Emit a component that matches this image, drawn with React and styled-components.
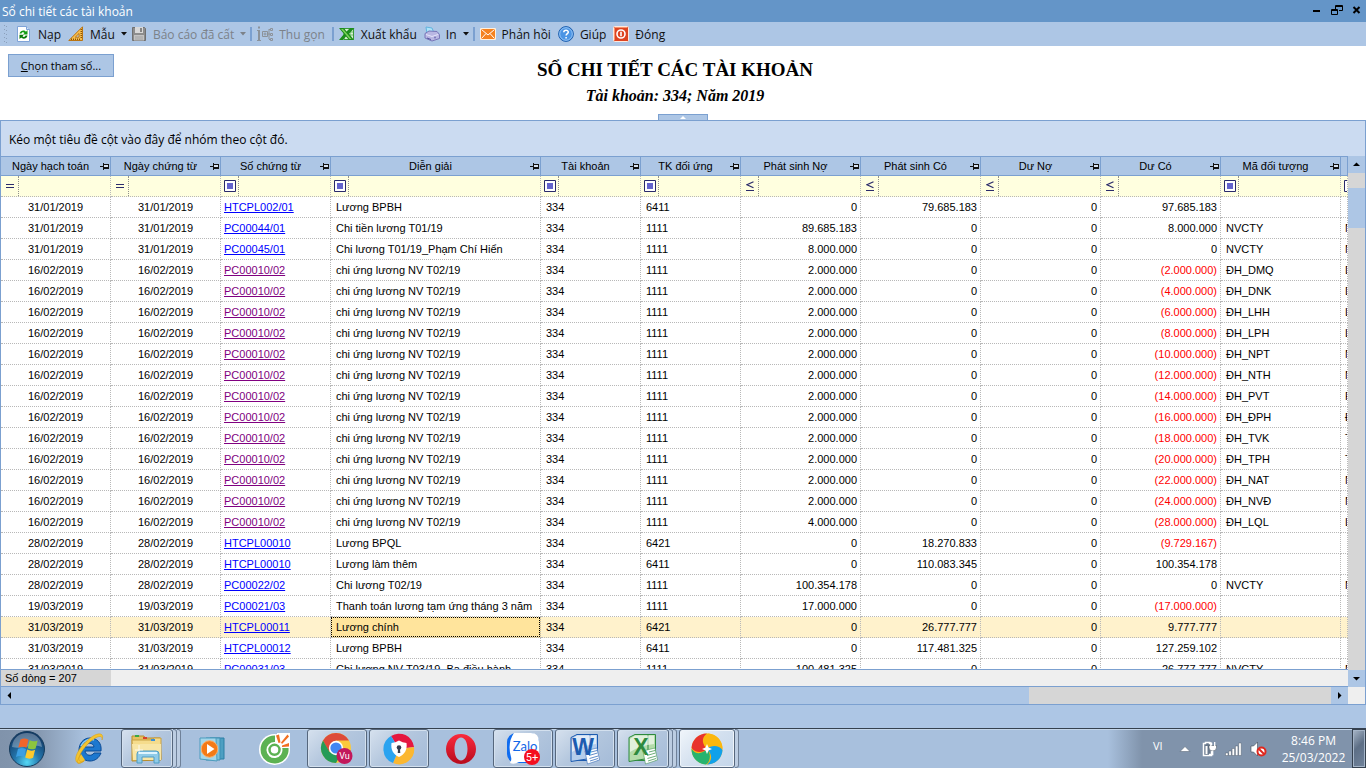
import React, { useState } from "react";
import styled, { createGlobalStyle, css } from "styled-components";

const GlobalStyle = createGlobalStyle`
  * {
    box-sizing: border-box;
  }
  body {
    margin: 0;
    font-family: "Liberation Sans", Arial, sans-serif;
    font-size: 11px;
    color: #000;
  }
  button, input {
    font: inherit;
    color: inherit;
    margin: 0;
    padding: 0;
    border: 0;
    background: none;
  }
`;

const UI_FONT = `"Open Sans", "Noto Sans", sans-serif`;
const LINE = "#7ba0d0";
const BLUE = "#adc6e5";
const DOTS = "1px dotted #b8b8b8";

const Screen = styled.div`
  display: flex;
  flex-direction: column;
  height: 100vh;
  overflow: hidden;
  background: ${BLUE};
`;

const TitleBar = styled.header`
  display: flex;
  align-items: center;
  justify-content: space-between;
  height: 22px;
  padding: 0 3px 0 2px;
  background: #6495c8;
  color: #fff;
  font-family: ${UI_FONT};
  font-size: 12px;
`;

const WindowButtons = styled.div`
  display: flex;
  gap: 8px;
`;

const WindowButton = styled.button`
  display: flex;
  width: 12px;
  height: 20px;
  align-items: center;
  justify-content: center;
`;

const Toolbar = styled.nav`
  display: flex;
  align-items: center;
  height: 24px;
  padding-left: 4px;
  background: ${BLUE};
  font-family: ${UI_FONT};
  font-size: 12px;
`;

const Grip = styled.svg`
  margin-right: 8px;
`;

const ToolButton = styled.button`
  display: flex;
  align-items: center;
  gap: 6px;
  height: 22px;
  padding-right: ${(p) => (p.$menu ? 4 : 7)}px;
  white-space: nowrap;
  color: ${(p) => (p.disabled ? "#7c8289" : "#101010")};
  svg {
    flex: none;
  }
`;

const Separator = styled.span`
  width: 2px;
  height: 14px;
  margin-right: 5px;
  background: ${LINE};
`;

const ReportHead = styled.section`
  display: grid;
  grid-template-columns: 1fr auto 1fr;
  height: 74px;
  padding: 8px 24px 0 8px;
  background: #fff;
`;

const ParamButton = styled.button`
  justify-self: start;
  width: 106px;
  height: 23px;
  border: 1px solid ${LINE};
  background: ${BLUE};
  font-family: ${UI_FONT};
`;

const Titles = styled.div`
  text-align: center;
  font-family: "Liberation Serif", "Times New Roman", serif;
  font-weight: bold;
`;

const Title = styled.h1`
  margin: 4px 0 0;
  font-size: 19px;
  line-height: 24px;
`;

const SubTitle = styled.h2`
  margin: 2px 0 0;
  font-size: 16px;
  line-height: 24px;
  font-style: italic;
`;

const Splitter = styled.div`
  display: flex;
  justify-content: center;
  align-items: flex-end;
  height: 0;
`;

const SplitHandle = styled.button`
  display: flex;
  align-items: center;
  justify-content: center;
  width: 50px;
  height: 6px;
  border: 1px solid ${LINE};
  border-bottom: 0;
  background: ${BLUE};
`;

const Grid = styled.main`
  flex: 1;
  min-height: 0;
  display: flex;
  flex-direction: column;
  border: 1px solid ${LINE};
`;

const GroupArea = styled.div`
  flex: none;
  height: 35px;
  padding: 0 8px;
  background: #cbdbf1;
  font-family: ${UI_FONT};
  font-size: 12px;
  line-height: 38px;
`;

const GridBody = styled.div`
  flex: 1;
  min-height: 0;
  display: grid;
  grid-template-columns: 1fr 17px;
  grid-template-rows: 1fr 17px;
  background: #fff;
`;

const TablePane = styled.div`
  display: flex;
  flex-direction: column;
  min-width: 0;
  min-height: 0;
  overflow: hidden;
`;

const TableClip = styled.div`
  flex: 1;
  min-height: 0;
  overflow: hidden;
`;

const Table = styled.table`
  width: 100%;
  table-layout: fixed;
  border-collapse: separate;
  border-spacing: 0;
`;

const HeadCell = styled.th`
  height: 20px;
  padding: 0;
  border: solid ${LINE};
  border-width: 1px 1px 1px 0;
  background: ${BLUE};
  font-weight: normal;
  overflow: hidden;
`;

const HeadInner = styled.div`
  display: flex;
  align-items: center;
  line-height: 18px;
  white-space: nowrap;
  span {
    flex: 1;
  }
  svg {
    flex: none;
  }
`;

const FilterCell = styled.td`
  height: 21px;
  padding: 0;
  border-right: ${DOTS};
  border-bottom: ${DOTS};
  background: #ffffdf;
  overflow: hidden;
`;

const FilterInner = styled.label`
  display: flex;
  height: 20px;
`;

const Operator = styled.span`
  flex: none;
  display: flex;
  align-items: center;
  justify-content: center;
  width: 18px;
  border-right: 1px dotted #909090;
`;

const FilterInput = styled.input`
  flex: 1;
  min-width: 0;
  padding: 0 3px;
  outline: none;
`;

const cellPadding = { center: 3, right: 3, doc: 3, name: 4, left: 5 };

const Cell = styled.td`
  height: 21px;
  padding: 0 ${(p) => cellPadding[p.$align]}px;
  border-right: ${DOTS};
  border-bottom: ${DOTS};
  line-height: 20px;
  text-align: ${(p) => (p.$align === "center" || p.$align === "right" ? p.$align : "left")};
  white-space: nowrap;
  overflow: hidden;
  color: ${(p) => (p.$negative ? "#ff0000" : "#000")};
  ${(p) =>
    p.$focused &&
    css`
      position: relative;
      background: #ffe49c;
      &::after {
        content: "";
        position: absolute;
        inset: 0;
        border: 1px dotted #000;
      }
    `}
`;

const Row = styled.tr`
  background: ${(p) => (p.$active ? "#fff2cc" : "#fff")};
  cursor: default;
`;

const DocLink = styled.a`
  color: ${(p) => (p.$visited ? "#800080" : "#0000ff")};
`;

const Summary = styled.div`
  flex: none;
  height: 18px;
  border: solid ${LINE};
  border-width: 1px 0;
  background: #efefef;
  line-height: 17px;
`;

const SummaryCell = styled.div`
  width: 110px;
  height: 16px;
  padding-left: 4px;
  background: #d6d6d6;
`;

const VScroll = styled.div`
  display: flex;
  flex-direction: column;
  background: #d6d6d6;
`;

const HScroll = styled.div`
  display: flex;
  background: #d6d6d6;
`;

const ScrollButton = styled.button`
  flex: none;
  display: flex;
  align-items: center;
  justify-content: center;
  width: 17px;
  height: 17px;
  background: ${BLUE};
`;

const VTrack = styled.div`
  flex: 1;
  padding-top: 15px;
`;

const VThumb = styled.div`
  height: 40px;
  background: ${BLUE};
`;

const HTrack = styled.div`
  flex: 1;
`;

const HThumb = styled.div`
  width: 77%;
  height: 17px;
  background: ${BLUE};
`;

const Corner = styled.div`
  background: #efefef;
`;

const StatusStrip = styled.div`
  flex: none;
  height: 23px;
  background: ${BLUE};
`;

const Taskbar = styled.footer`
  flex: none;
  display: flex;
  height: 40px;
  border-top: 1px solid #35414f;
  box-shadow: inset 0 1px 0 #c4d6ea;
  background:
    linear-gradient(90deg, #8093ab 0, #8598b0 38px, rgba(168, 192, 221, 0) 84px),
    linear-gradient(270deg, #8093ab 0, #8093ab 224px, rgba(168, 192, 221, 0) 258px),
    #a8c0dd;
`;

const StartButton = styled.button`
  flex: none;
  width: 59px;
  padding-left: 8px;
  text-align: left;
  svg {
    display: block;
  }
`;

const TaskSlot = styled.div`
  flex: none;
  display: flex;
  width: 62px;
  padding-right: 2px;
`;

const TaskButton = styled.button`
  flex: 1;
  display: flex;
  align-items: center;
  justify-content: center;
  height: 39px;
  ${(p) =>
    p.$open &&
    css`
      border: 1px solid #56677d;
      border-radius: 3px;
      background: linear-gradient(135deg, #d6e1ee 0%, #b4c7de 45%, #a4bbd8 100%);
      box-shadow: inset 0 0 0 1px #d3e0ee;
    `}
  ${(p) =>
    p.$current &&
    css`
      background: linear-gradient(135deg, #f0f5fa 0%, #d3e0ef 50%, #c4d6ea 100%);
      box-shadow: inset 0 0 0 1px #eef4fa;
    `}
`;

const StackEdge = styled.span`
  width: 4px;
  height: 39px;
  border: solid #6f8199;
  border-width: 1px 1px 1px 0;
  border-radius: 0 3px 3px 0;
  background: #bccde2;
`;

const Tray = styled.div`
  display: flex;
  align-items: center;
  margin-left: auto;
  color: #fff;
  font-family: ${UI_FONT};
`;

const Lang = styled.span`
  width: 11px;
  margin: 0 13px 6px 0;
`;

const TrayButton = styled.button`
  display: flex;
  margin-right: 8px;
`;

const Clock = styled.time`
  width: 77px;
  font-size: 12px;
  line-height: 17px;
  text-align: center;
`;

const ShowDesktop = styled.button`
  width: 14px;
  height: 39px;
  border: 1px solid #35414f;
  background: linear-gradient(135deg, #a9b7c8, #5d6f86 45%, #71839b);
  box-shadow: inset 0 0 0 1px #a5b5c8;
`;

const CaretDown = () => (
  <svg width="6" height="4" viewBox="0 0 6 4">
    <path d="M0 0h6L3 3.600z" fill="currentColor" />
  </svg>
);

const RefreshIcon = () => (
  <svg width="16" height="16" viewBox="0 0 16 16">
    <path d="M1.500.5h9l3 3v12h-12z" fill="#fff" stroke="#7fa3d8" />
    <path d="M10.500.5v3h3" fill="#d4e3f7" stroke="#7fa3d8" />
    <path d="M3.500 7.500C4.500 4 8.500 3.500 10 5.700L11.500 4v4.500H7L8.500 7C7.500 5.700 5.700 6.300 5.500 7.500z" fill="#119c11" />
    <path d="M11.500 9.500c-.8 3.500-4.800 4-6.300 2L3.500 13V8.800h4.300L6.500 10.200c1 1.200 2.600.8 3-.7z" fill="#087b08" />
  </svg>
);

const RulerIcon = () => (
  <svg width="16" height="16" viewBox="0 0 16 16">
    <path d="M14.500.8v13.700H.8z" fill="#f7bd4a" stroke="#b97412" />
    <path d="M11 7.500v3.700H7.300z" fill="#c2d4ea" stroke="#b97412" />
    <path d="M3.500 14v-1.500M5.500 14v-1.500M7.500 14v-1.500M9.500 14v-1.500M11.500 14v-1.500M14 3.500h-1.500M14 5.500h-1.500M14 7.500h-1.500M14 9.500h-1.500M14 11.500h-1.500" stroke="#8a5205" />
  </svg>
);

const DiskIcon = () => (
  <svg width="16" height="16" viewBox="0 0 16 16">
    <path d="M1.500 1.500h12l1 1v12h-13z" fill="#8d8d8d" stroke="#707070" />
    <path d="M4 1h8v6H4z" fill="#d9d9d9" />
    <path d="M9 2h2v4H9z" fill="#858585" />
    <path d="M3 9h10v5.500H3z" fill="#c3c3c3" />
    <path d="M4 11h8M4 13h8" stroke="#a4a4a4" />
  </svg>
);

const TreeIcon = () => (
  <svg width="16" height="16" viewBox="0 0 16 16" fill="none" stroke="#8c9299">
    <path d="M1 1.500h2" strokeWidth="2" />
    <path d="M0 4.500h2M0 14.500h4" />
    <path d="M2 4v10" strokeWidth="2" />
    <path d="M5.500 5.500h5v5h-5zM6.500 8h3M8 6.500v3M10.500 8H13M12 3v10M12 3.500h1M12 13.500h1" />
    <path d="M13.500 2.500h2v2h-2zM13.500 7.500h2v2h-2zM13.500 12.500h2v2h-2z" />
  </svg>
);

const ExcelSmallIcon = () => (
  <svg width="16" height="16" viewBox="0 0 16 16">
    <path d="M5 2.500h9.500v11H5z" fill="#d9f0d5" stroke="#3a9a3a" />
    <path d="M8 6h6M8 9h6M11 3v10" stroke="#6dbb6d" />
    <path d="M0 2h5l2.500 3.500L11 2h4.500L10 7.800l5 6.200h-5L7 10.500 4 14H0l5-6z" fill="#1d8d1d" />
    <path d="M2 3h2l8.500 10h-2z" fill="#7dd35c" />
  </svg>
);

const PrinterIcon = () => (
  <svg width="16" height="16" viewBox="0 0 16 16">
    <path d="M2 1l6 1 2 5-7 1z" fill="#aee4fa" stroke="#62b3dd" />
    <path d="M1 7.500l4-2.500 8 .5 2.500 3v4L8 15 1 12z" fill="#b9b7e3" stroke="#7876b8" />
    <path d="M2 8.500l6 2 6-2" fill="none" stroke="#e5e4fa" />
    <path d="M3 12l4 1.500" stroke="#5553a0" />
    <circle cx="11" cy="11.500" r="1" fill="#7876b8" />
  </svg>
);

const MailIcon = () => (
  <svg width="16" height="16" viewBox="0 0 16 16">
    <path d="M.5 2.500h15v11H.5z" fill="#f5821f" stroke="#fff0dd" />
    <path d="M1.500 3.500L8 9l6.500-5.500M1.500 12.500l4.500-5M14.500 12.500l-4.500-5" fill="none" stroke="#fff" />
  </svg>
);

const HelpIcon = () => (
  <svg width="16" height="16" viewBox="0 0 16 16">
    <circle cx="8" cy="8" r="7.400" fill="#4a94e4" stroke="#1e5fae" />
    <circle cx="8" cy="8" r="6.300" fill="none" stroke="#a9d2fb" strokeWidth=".8" />
    <path d="M5.800 6.300C5.800 3.500 10.400 3.600 10.300 6.200 10.200 7.600 8.100 7.700 8.100 9.600M8.100 11v1.500" fill="none" stroke="#fff" strokeWidth="1.500" />
  </svg>
);

const PowerIcon = () => (
  <svg width="16" height="16" viewBox="0 0 16 16">
    <rect x=".5" y=".5" width="15" height="15" rx="1" fill="#dd4421" stroke="#fde9df" />
    <path d="M1.500 14.500v-13h13" fill="none" stroke="#f5926e" />
    <circle cx="8" cy="8" r="4" fill="none" stroke="#fff" strokeWidth="1.600" />
    <path d="M8 5.800v4.400" stroke="#fff" strokeWidth="1.600" />
  </svg>
);

const PinIcon = () => (
  <svg width="10" height="9" viewBox="0 0 10 9" shapeRendering="crispEdges">
    <path d="M0 4h3v1H0zM3 1h1v7H3zM4 2h5v5H4z" fill="#111" />
    <path d="M4 3h4v2H4z" fill="#d7e3f3" />
  </svg>
);

const Arrow = ({ d }) => (
  <svg width="9" height="9" viewBox="0 0 9 9">
    <path d={d} fill="#000" />
  </svg>
);

const operators = {
  eq: (
    <svg width="8" height="4" viewBox="0 0 8 4">
      <path d="M0 .5h8M0 3.500h8" stroke="#2a2a6a" />
    </svg>
  ),
  box: (
    <svg width="12" height="12" viewBox="0 0 12 12">
      <path d="M.5.5h11v11H.5z" fill="#fff" stroke="#2a2a6a" />
      <path d="M3 3h6v6H3z" fill="#6464cc" />
    </svg>
  ),
  le: (
    <svg width="8" height="10" viewBox="0 0 8 10">
      <path d="M7.500.8L1 3.800l6.500 3M0 9.500h8" fill="none" stroke="#2a2a6a" strokeWidth="1.200" />
    </svg>
  ),
};

const columns = [
  { label: "Ngày hạch toán", width: 110, op: "eq" },
  { label: "Ngày chứng từ", width: 110, op: "eq" },
  { label: "Số chứng từ", width: 110, op: "box" },
  { label: "Diễn giải", width: 210, op: "box" },
  { label: "Tài khoản", width: 100, op: "box" },
  { label: "TK đối ứng", width: 100, op: "box" },
  { label: "Phát sinh Nợ", width: 120, op: "le" },
  { label: "Phát sinh Có", width: 120, op: "le" },
  { label: "Dư Nợ", width: 120, op: "le" },
  { label: "Dư Có", width: 120, op: "le" },
  { label: "Mã đối tượng", width: 120, op: "box" },
  { label: "", op: "box" },
];

// date, document, description, contra account, debit, credit, balance, code, name, visited
const advance = (balance, code, name, debit = "2.000.000") => [
  "16/02/2019", "PC00010/02", "chi ứng lương NV T02/19", "1111", debit, "0", balance, code, name, true,
];

const rows = [
  ["31/01/2019", "HTCPL002/01", "Lương BPBH", "6411", "0", "79.685.183", "97.685.183", "", ""],
  ["31/01/2019", "PC00044/01", "Chi tiền lương T01/19", "1111", "89.685.183", "0", "8.000.000", "NVCTY", "N"],
  ["31/01/2019", "PC00045/01", "Chi lương T01/19_Phạm Chí Hiển", "1111", "8.000.000", "0", "0", "NVCTY", "N"],
  advance("(2.000.000)", "ĐH_DMQ", "D"),
  advance("(4.000.000)", "ĐH_DNK", "D"),
  advance("(6.000.000)", "ĐH_LHH", "L"),
  advance("(8.000.000)", "ĐH_LPH", "L"),
  advance("(10.000.000)", "ĐH_NPT", "N"),
  advance("(12.000.000)", "ĐH_NTH", "N"),
  advance("(14.000.000)", "ĐH_PVT", "P"),
  advance("(16.000.000)", "ĐH_ĐPH", "Đ"),
  advance("(18.000.000)", "ĐH_TVK", "T"),
  advance("(20.000.000)", "ĐH_TPH", "T"),
  advance("(22.000.000)", "ĐH_NAT", "N"),
  advance("(24.000.000)", "ĐH_NVĐ", "N"),
  advance("(28.000.000)", "ĐH_LQL", "L", "4.000.000"),
  ["28/02/2019", "HTCPL00010", "Lương BPQL", "6421", "0", "18.270.833", "(9.729.167)", "", ""],
  ["28/02/2019", "HTCPL00010", "Lương làm thêm", "6411", "0", "110.083.345", "100.354.178", "", ""],
  ["28/02/2019", "PC00022/02", "Chi lương T02/19", "1111", "100.354.178", "0", "0", "NVCTY", "N"],
  ["19/03/2019", "PC00021/03", "Thanh toán lương tạm ứng tháng 3 năm", "1111", "17.000.000", "0", "(17.000.000)", "", ""],
  ["31/03/2019", "HTCPL00011", "Lương chính", "6421", "0", "26.777.777", "9.777.777", "", ""],
  ["31/03/2019", "HTCPL00012", "Lương BPBH", "6411", "0", "117.481.325", "127.259.102", "", ""],
  ["31/03/2019", "PC00031/03", "Chi lương NV T03/19_Ba điều hành", "1111", "100.481.325", "0", "26.777.777", "NVCTY", "N"],
];

const LedgerRow = ({ row, active, onSelect }) => {
  const [date, doc, text, contra, debit, credit, balance, code, name, visited] = row;
  return (
    <Row $active={active} onClick={onSelect}>
      <Cell $align="center">{date}</Cell>
      <Cell $align="center">{date}</Cell>
      <Cell $align="doc">
        <DocLink href="#" $visited={visited}>{doc}</DocLink>
      </Cell>
      <Cell $align="left" $focused={active}>{text}</Cell>
      <Cell $align="left">334</Cell>
      <Cell $align="left">{contra}</Cell>
      <Cell $align="right">{debit}</Cell>
      <Cell $align="right">{credit}</Cell>
      <Cell $align="right">0</Cell>
      <Cell $align="right" $negative={balance.startsWith("(")}>{balance}</Cell>
      <Cell $align="left">{code}</Cell>
      <Cell $align="name">{name}</Cell>
    </Row>
  );
};

const WindowsLogo = () => (
  <svg width="38" height="38" viewBox="0 0 38 38">
    <defs>
      <radialGradient id="orb" cx="50%" cy="88%" r="80%">
        <stop offset="0" stopColor="#54d8f5" />
        <stop offset=".45" stopColor="#2476ac" />
        <stop offset="1" stopColor="#123a66" />
      </radialGradient>
    </defs>
    <circle cx="19" cy="19" r="17.500" fill="url(#orb)" stroke="#153b5c" />
    <path d="M4 17C5 7 12 3 19 3s14 4 15 14c-9-4-20 3-30 0z" fill="#fff" opacity=".3" />
    <path d="M12.500 9.500c3-1.500 5.500-1 8 .2l-2 8c-2.500-1.300-5-1.400-8.200-.2z" fill="#f0652b" />
    <path d="M21.700 10.300c2.600 1.400 5.200 1.400 7.900.1l-2 8c-2.700 1.300-5.300 1.200-7.900-.1z" fill="#8cc63e" />
    <path d="M10 18.800c3-1.300 5.500-1.100 8 .2l-2 8c-2.500-1.200-5-1.300-8-.1z" fill="#3b9fe3" />
    <path d="M19.200 19.600c2.600 1.300 5.200 1.400 7.900.1l-2 8c-2.700 1.300-5.300 1.200-7.900-.1z" fill="#fcc92d" />
  </svg>
);

const IeIcon = () => (
  <svg width="34" height="34" viewBox="0 0 34 34">
    <path d="M18 6c7 0 12 5 11 13H13c.5 5 7 5.500 9 2h7c-2 5-6 8-11 8C11 29 7 24 7 18S11 6 18 6zm-5 9h9c-.5-5-8.500-5-9 0z" fill="#1d78cf" stroke="#0b4a94" />
    <path d="M9 14c2-5 8-8 13-6" fill="none" stroke="#8fd0fa" strokeWidth="1.500" />
    <path d="M9 22C3 31 5 34 12 29 4 32 6 23 14 14 22 5 31 1 30 8c3-8-5-8-13-1C9 13 2 24 4 29c1 3 5 3 9-1" fill="#f4c430" stroke="#d59a13" strokeWidth=".5" />
  </svg>
);

const FolderIcon = () => (
  <svg width="34" height="32" viewBox="0 0 34 32">
    <path d="M2 3h12l1 2h15l1 22-29 1z" fill="#e5c263" stroke="#b88d2c" />
    <path d="M2 7h20l2-2h7v21H3z" fill="#f5dc8c" stroke="#c89f40" />
    <path d="M2 11h29v16H3z" fill="#f8e6a6" />
    <path d="M5 2h4v2H5z" fill="#3aa845" />
    <path d="M13 4h4v2h-4z" fill="#d8412c" />
    <path d="M21 6h4v2h-4z" fill="#3b91d8" />
    <path d="M7 30V21q0-3 3-3h16q3 0 3 3v9h-5v-6H12v6z" fill="#8fcbe8" stroke="#4c9cc5" />
    <path d="M9 20h18" stroke="#dff5ff" strokeWidth="2" />
    <path d="M9 12v9M5 17h8" stroke="#fff" opacity=".8" />
  </svg>
);

const MediaIcon = () => (
  <svg width="28" height="26" viewBox="0 0 28 26">
    <path d="M11 2h14v21H11z" fill="#4d9fc2" stroke="#2c7fa5" />
    <path d="M7 2h14v22H7z" fill="#7dc0da" stroke="#3c8fb3" />
    <path d="M1 2h16l1 23-17-2z" fill="#a4d6ea" stroke="#4d9dbe" />
    <circle cx="10.500" cy="13" r="8.300" fill="#f47a16" stroke="#fbb06a" />
    <path d="M8 8l7.500 5L8 18z" fill="#fff" />
  </svg>
);

const CocCocIcon = () => (
  <svg width="32" height="32" viewBox="0 0 32 32">
    <circle cx="15.500" cy="16.500" r="15.500" fill="#fff" />
    <path d="M18 0h13v15H18z" fill="#fff" />
    <path d="M16 2.500A14 14 0 1 0 29.500 15h-6.300A8 8 0 1 1 16 9z" fill="#5cb253" />
    <circle cx="15.500" cy="16.800" r="5" fill="#fff" stroke="#5cb253" strokeWidth="2.500" />
    <path d="M17 2.500l3-1 1.500 8-2 .5zM28.500 1.500l1.500 2-7 7.500-1-1.500zM30 10v3.500l-7 .5v-1.500z" fill="#f26f21" />
  </svg>
);

const ChromeIcon = () => (
  <svg width="34" height="34" viewBox="0 0 34 34">
    <circle cx="16" cy="16" r="15" fill="#fbc93c" />
    <path d="M3 8.500a15 15 0 0 1 26 0H16L9 20z" fill="#dd4b3a" />
    <path d="M3 8.500A15 15 0 0 0 16 31l6.500-11.500L9.500 20z" fill="#259b58" />
    <circle cx="16" cy="16" r="7.200" fill="#fff" />
    <circle cx="16" cy="16" r="5.600" fill="#4286f4" />
    <circle cx="24.500" cy="24" r="8" fill="#c2185b" />
    <text x="24.500" y="27" fontSize="9" fill="#fff" textAnchor="middle" fontFamily="Roboto, sans-serif">Vu</text>
  </svg>
);

const AvgIcon = () => (
  <svg width="32" height="32" viewBox="0 0 32 32">
    <path d="M16 16L8 3A15 15 0 0 1 31 14z" fill="#e5173f" />
    <path d="M16 16l15-2A15 15 0 0 1 10 30z" fill="#fbb731" />
    <path d="M16 16l-6 14A15 15 0 0 1 8 3z" fill="#2aa3f0" />
    <path d="M16 7.500q3.500 2 7.500 2.500c1 7-2 11.500-7.500 14-5.500-2.500-8.500-7-7.500-14q4-.5 7.500-2.500z" fill="#fff" />
    <circle cx="16" cy="14.500" r="2.300" fill="#333c4e" />
    <path d="M15.200 14h1.600l.5 6h-2.600z" fill="#333c4e" />
  </svg>
);

const OperaIcon = () => (
  <svg width="32" height="32" viewBox="0 0 32 32">
    <defs>
      <linearGradient id="opera" x1="0" y1="0" x2="0" y2="1">
        <stop offset="0" stopColor="#fb2b3d" />
        <stop offset="1" stopColor="#b70a1c" />
      </linearGradient>
    </defs>
    <path fillRule="evenodd" d="M16 1a15 15 0 1 0 0 30 15 15 0 0 0 0-30zm0 3.500c4 0 6.500 5 6.500 11.500S20 27.500 16 27.500 9.500 22.500 9.500 16 12 4.500 16 4.500z" fill="url(#opera)" />
  </svg>
);

const ZaloIcon = () => (
  <svg width="34" height="34" viewBox="0 0 34 34">
    <rect x="1" y="1" width="32" height="30" rx="9" fill="#0f6cf0" />
    <path d="M8 1h17q8 0 8 9v12q0 8-8 8H13q-5 3-9 1 2-3 1-6-4-14 3-24z" fill="#fff" />
    <text x="19" y="19" fontSize="13" fill="#1368e8" textAnchor="middle" fontFamily="Lato, sans-serif">Zalo</text>
    <circle cx="26" cy="25" r="8" fill="#f40f1f" />
    <text x="26" y="29" fontSize="11" fill="#fff" textAnchor="middle" fontFamily="Roboto, sans-serif">5+</text>
  </svg>
);

const OfficeIcon = ({ letter, color, tint }) => (
  <svg width="32" height="32" viewBox="0 0 32 32">
    <path d="M8 1.500h20.500v26H8z" fill={tint} stroke={color} />
    <path d="M2 4.500l6-3h13v24L2 28.500z" fill={tint} stroke={color} />
    <path d="M3 6l5-3.500h19V11Q14 12 3 19z" fill="#fff" opacity=".6" />
    <path d="M16 18l12-3 2.500 12-12 4z" fill="#fff" stroke={color} strokeWidth=".5" />
    <path d="M22 19l6-1.500M20 22.500l8.500-2.500M20.500 25.500l8.500-2.500M21 28l8-2.500" stroke={color} strokeWidth=".7" />
    <text x="14" y="22" fontSize="23" fontWeight="bold" fill={color} textAnchor="middle" fontFamily="Liberation Sans, sans-serif">{letter}</text>
  </svg>
);

const PinwheelIcon = () => (
  <svg width="34" height="34" viewBox="0 0 34 34">
    <circle cx="17" cy="17" r="15.500" fill="#fbb70d" />
    <path d="M17 17C13 21 5 21 1.600 16 2 8 8 1.500 17 1.500 11 6 12 12 17 17z" fill="#e8332c" />
    <path d="M17 17c-4-4-4-12 1-15.500C26 2 32.500 8 32.500 17 28 11 22 12 17 17z" fill="#fbb70d" />
    <path d="M17 17c4-4 12-4 15.500 1C32 26 26 32.500 17 32.500 23 28 22 22 17 17z" fill="#11a1ea" />
    <path d="M17 17c4 4 4 12-1 15.500C8 32 1.500 26 1.500 17 6 23 12 22 17 17z" fill="#27b36f" />
    <path d="M17 12l1.500 3.500L22 17l-3.500 1.500L17 22l-1.500-3.500L12 17l3.500-1.500z" fill="#fff" />
  </svg>
);

const apps = [
  { name: "Internet Explorer", icon: <IeIcon /> },
  { name: "Windows Explorer", icon: <FolderIcon />, open: true, stack: 2 },
  { name: "Windows Media Player", icon: <MediaIcon /> },
  { name: "Cốc Cốc", icon: <CocCocIcon /> },
  { name: "Google Chrome", icon: <ChromeIcon />, open: true },
  { name: "AVG Secure Browser", icon: <AvgIcon />, open: true },
  { name: "Opera", icon: <OperaIcon /> },
  { name: "Zalo", icon: <ZaloIcon />, open: true },
  { name: "Word", icon: <OfficeIcon letter="W" color="#1c5bb0" tint="#b5cdec" />, open: true },
  { name: "Excel", icon: <OfficeIcon letter="X" color="#2d8a3e" tint="#b4dcab" />, open: true, stack: 2 },
  { name: "MISA", icon: <PinwheelIcon />, open: true, current: true, stack: 1 },
];

export default function App() {
  const [selected, setSelected] = useState(20);

  return (
    <Screen>
      <GlobalStyle />
      <TitleBar>
        <span>Sổ chi tiết các tài khoản</span>
        <WindowButtons>
          <WindowButton aria-label="Thu nhỏ">
            <svg width="12" height="12" viewBox="0 0 12 12"><path d="M2 5h7v2H2z" fill="#000" /></svg>
          </WindowButton>
          <WindowButton aria-label="Khôi phục">
            <svg width="12" height="12" viewBox="0 0 12 12" fill="none" stroke="#000">
              <path d="M4.500 4V.5h7v5H8M4 1.500h8M.5 4.500h6v5h-6zM0 5.500h7" />
            </svg>
          </WindowButton>
          <WindowButton aria-label="Đóng cửa sổ">
            <svg width="12" height="12" viewBox="0 0 12 12"><path d="M2.500 2l6 6M8.500 2l-6 6" stroke="#000" strokeWidth="2" /></svg>
          </WindowButton>
        </WindowButtons>
      </TitleBar>

      <Toolbar>
        <Grip width="4" height="18" viewBox="0 0 4 18">
          <path d="M.5 0v18M2.500 1v18" stroke="#8ba0bb" strokeDasharray="1 3" />
        </Grip>
        <ToolButton><RefreshIcon />Nạp</ToolButton>
        <ToolButton $menu><RulerIcon />Mẫu<CaretDown /></ToolButton>
        <ToolButton $menu disabled><DiskIcon />Báo cáo đã cất<CaretDown /></ToolButton>
        <Separator />
        <ToolButton disabled><TreeIcon />Thu gọn</ToolButton>
        <Separator />
        <ToolButton><ExcelSmallIcon />Xuất khẩu</ToolButton>
        <ToolButton $menu><PrinterIcon />In<CaretDown /></ToolButton>
        <Separator />
        <ToolButton><MailIcon />Phản hồi</ToolButton>
        <ToolButton><HelpIcon />Giúp</ToolButton>
        <ToolButton><PowerIcon />Đóng</ToolButton>
      </Toolbar>

      <ReportHead>
        <ParamButton><u>C</u>họn tham số...</ParamButton>
        <Titles>
          <Title>SỔ CHI TIẾT CÁC TÀI KHOẢN</Title>
          <SubTitle>Tài khoản: 334; Năm 2019</SubTitle>
        </Titles>
      </ReportHead>
      <Splitter>
        <SplitHandle aria-label="Ẩn tiêu đề">
          <svg width="6" height="3" viewBox="0 0 6 3"><path d="M3 0l3 3H0z" fill="#fff" /></svg>
        </SplitHandle>
      </Splitter>

      <Grid>
        <GroupArea>Kéo một tiêu đề cột vào đây để nhóm theo cột đó.</GroupArea>
        <GridBody>
          <TablePane>
            <TableClip>
              <Table>
                <colgroup>
                  {columns.map((c, i) => <col key={i} width={c.width} />)}
                </colgroup>
                <thead>
                  <tr>
                    {columns.map((c, i) => (
                      <HeadCell key={i}>
                        <HeadInner>
                          <span>{c.label}</span>
                          {c.label && <PinIcon />}
                        </HeadInner>
                      </HeadCell>
                    ))}
                  </tr>
                </thead>
                <tbody>
                  <tr>
                    {columns.map((c, i) => (
                      <FilterCell key={i}>
                        <FilterInner>
                          <Operator>{operators[c.op]}</Operator>
                          <FilterInput aria-label={c.label || "Tên đối tượng"} />
                        </FilterInner>
                      </FilterCell>
                    ))}
                  </tr>
                  {rows.map((row, i) => (
                    <LedgerRow key={i} row={row} active={i === selected} onSelect={() => setSelected(i)} />
                  ))}
                </tbody>
              </Table>
            </TableClip>
            <Summary>
              <SummaryCell>Số dòng = 207</SummaryCell>
            </Summary>
          </TablePane>
          <VScroll>
            <ScrollButton aria-label="Cuộn lên"><Arrow d="M1 6h7L4.500 2.500z" /></ScrollButton>
            <VTrack><VThumb /></VTrack>
            <ScrollButton aria-label="Cuộn xuống"><Arrow d="M1 3h7L4.500 6.500z" /></ScrollButton>
          </VScroll>
          <HScroll>
            <ScrollButton aria-label="Cuộn trái"><Arrow d="M6 1v7L2.500 4.500z" /></ScrollButton>
            <HTrack><HThumb /></HTrack>
            <ScrollButton aria-label="Cuộn phải"><Arrow d="M3 1v7l3.500-3.500z" /></ScrollButton>
          </HScroll>
          <Corner />
        </GridBody>
      </Grid>
      <StatusStrip />

      <Taskbar>
        <StartButton aria-label="Start"><WindowsLogo /></StartButton>
        {apps.map((app) => (
          <TaskSlot key={app.name}>
            <TaskButton aria-label={app.name} $open={app.open} $current={app.current}>{app.icon}</TaskButton>
            {Array.from({ length: app.stack || 0 }, (_, i) => <StackEdge key={i} />)}
          </TaskSlot>
        ))}
        <Tray>
          <Lang>VI</Lang>
          <TrayButton aria-label="Biểu tượng ẩn">
            <svg width="16" height="16" viewBox="0 0 16 16"><path d="M3 10.500h10L8 5.500z" fill="#fff" stroke="#5d6b7c" strokeWidth=".6" /></svg>
          </TrayButton>
          <TrayButton aria-label="Nguồn điện">
            <svg width="16" height="16" viewBox="0 0 16 16">
              <path d="M2.500 2.500h2v-1h4v1h2v12h-8z" fill="#68788c" stroke="#fff" strokeWidth="1.500" />
              <path d="M4.500 5h2v8h-2z" fill="#fff" />
              <path d="M8 4.500h7.500v2q0 3.500-3.800 3.500T8 6.500z" fill="#fff" stroke="#36424f" strokeWidth=".5" />
              <path d="M9.800 1v4M13.700 1v4M11.700 10v3.500H8" fill="none" stroke="#fff" strokeWidth="1.300" />
            </svg>
          </TrayButton>
          <TrayButton aria-label="Mạng">
            <svg width="17" height="14" viewBox="0 0 17 14" fill="#fff" stroke="#3d4958" strokeWidth=".4">
              <path d="M.5 11H3v2.500H.5zM3.800 9h2.500v4.500H3.800zM7.100 6.500h2.500v7H7.100zM10.400 4h2.500v9.500h-2.500zM13.700 1h2.500v12.500h-2.500z" />
            </svg>
          </TrayButton>
          <TrayButton aria-label="Âm lượng">
            <svg width="17" height="16" viewBox="0 0 17 16">
              <path d="M1 5h2.500L7.500 1v14L3.500 11H1z" fill="#fff" stroke="#3d4958" strokeWidth=".6" />
              <circle cx="11.500" cy="10.500" r="4" fill="#fff" stroke="#e0281e" strokeWidth="2" />
              <path d="M9 8l5 5" stroke="#e0281e" strokeWidth="2" />
            </svg>
          </TrayButton>
          <Clock>8:46 PM<br />25/03/2022</Clock>
          <ShowDesktop aria-label="Hiện màn hình" />
        </Tray>
      </Taskbar>
    </Screen>
  );
}
